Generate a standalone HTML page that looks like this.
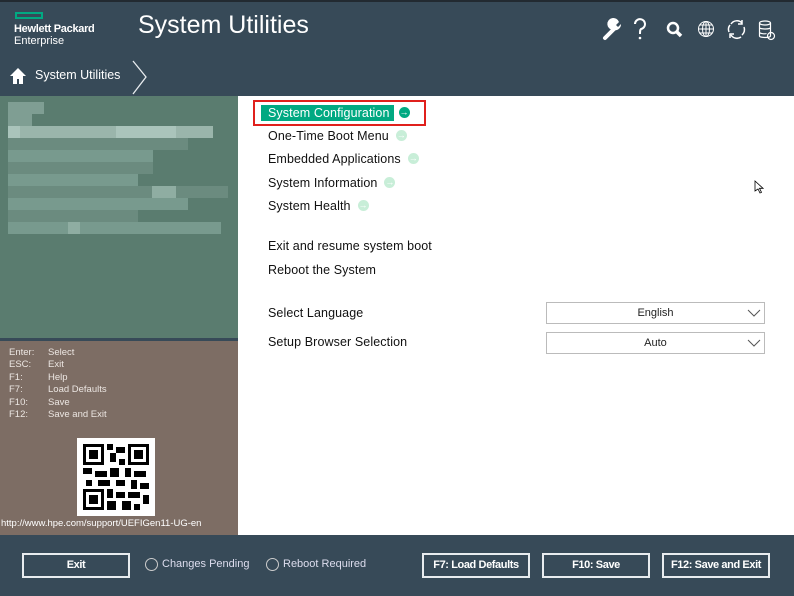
<!DOCTYPE html>
<html><head><style>
*{margin:0;padding:0;box-sizing:border-box}
body{width:794px;height:596px;background:#374a58;font-family:"Liberation Sans",sans-serif;position:relative;overflow:hidden}
.a{position:absolute}
.menu{font-size:12.5px;color:#111;position:absolute;left:268px;letter-spacing:0.1px}
.dot{display:inline-block;width:11px;height:11px;border-radius:50%;background:#c8eed8;vertical-align:middle;margin-left:7px;position:relative;top:-1px;color:#fff;font-size:9px;line-height:11px;text-align:center;font-weight:bold}
.key{position:absolute;left:9px;font-size:9.5px;color:#ece6e2}
.key span{position:absolute;left:39px;white-space:nowrap}
.btn{position:absolute;top:553px;height:25px;border:2px solid #e8ecef;color:#fff;font-size:11px;font-weight:bold;text-align:center;line-height:21px;letter-spacing:-0.4px}
.sel{position:absolute;left:546px;width:219px;height:22px;border:1px solid #bbb;background:#fff;font-size:11px;text-align:center;line-height:20px;color:#222}
.sel svg{position:absolute;right:3px;top:5px}
</style></head><body>
<div class="a" style="left:0;top:0;width:794px;height:2px;background:#222a31"></div>
<div class="a" style="left:15px;top:12px;width:28px;height:7px;border:2px solid #01a982"></div>
<div class="a" style="left:14px;top:23px;color:#fff;font-size:11px;font-weight:bold;letter-spacing:-0.3px">Hewlett Packard</div>
<div class="a" style="left:14px;top:35px;color:#fff;font-size:11px">Enterprise</div>
<div class="a" style="left:138px;top:11px;color:#fff;font-size:25px">System Utilities</div>
<svg class="a" style="left:600px;top:14px" width="190" height="30" viewBox="0 0 190 30" fill="none" stroke="#fff" stroke-width="2">
<path d="M5 24 L14 15" stroke-width="4" stroke-linecap="round"/><path d="M13 16 a6 6 0 1 1 6 -8 l-3 3 2 2 3-3 a6 6 0 0 1 -8 6z" fill="#fff" stroke="none"/>
<path d="M35 10 a5 5 0 1 1 6 5 c-1 1 -1 2 -1 5"/><circle cx="40" cy="24" r="1.3" fill="#fff" stroke="none"/>
<circle cx="73" cy="14" r="5" stroke-width="2.5"/><path d="M77 18 l4 4" stroke-width="3.5"/>
<g stroke-width="1"><circle cx="106" cy="15" r="7.5"/><ellipse cx="106" cy="15" rx="3.5" ry="7.5"/><path d="M98.5 15h15M100 11h12M100 19h12M106 7.5v15"/></g>
<g stroke-width="1.5"><path d="M131 10 a7 7 0 0 1 11 -1 M144 13 a7 7 0 0 1 -2 8 M141 23 a7 7 0 0 1 -10 -2 M129 18 a7 7 0 0 1 1 -7"/><path d="M142 6v4h-4M130 24v-4h4"/></g>
<g stroke-width="1.2"><ellipse cx="165" cy="9" rx="5.5" ry="2"/><path d="M159.5 9v13 c0 2 11 2 11 0v-13 M159.5 13.5c0 2 11 2 11 0 M159.5 18c0 2 6 2 7 1.5"/><circle cx="171" cy="22" r="3.5"/></g>
</svg>
<svg class="a" style="left:9px;top:67px" width="18" height="18" viewBox="0 0 18 18"><path d="M9 1 L1 9 h3 v8 h4 v-5 h2 v5 h4 v-8 h3z" fill="#fff"/></svg>
<div class="a" style="left:35px;top:68px;color:#fff;font-size:12.5px">System Utilities</div>
<svg class="a" style="left:130px;top:60px" width="20" height="36"><path d="M3 1 L16 17 L3 34" stroke="#e8ecef" stroke-width="1.3" fill="none"/></svg>
<div class="a" style="left:0;top:96px;width:238px;height:242px;background:#5a7c6f"></div>
<svg class="a" style="left:8px;top:102px" width="222" height="136">
<g fill="#7f9e93"><rect x="0" y="0" width="36" height="12"/><rect x="0" y="12" width="24" height="12"/></g>
<g fill="#9ab5ab"><rect x="0" y="24" width="205" height="12"/></g>
<g fill="#aac4bb"><rect x="0" y="24" width="12" height="12"/><rect x="108" y="24" width="60" height="12"/></g>
<g fill="#6d8d81" opacity=".9"><rect x="0" y="36" width="180" height="12"/><rect x="0" y="60" width="145" height="12"/><rect x="0" y="84" width="220" height="12"/><rect x="0" y="108" width="130" height="12"/></g>
<g fill="#789a8e"><rect x="0" y="48" width="145" height="12"/><rect x="0" y="72" width="130" height="12"/><rect x="0" y="96" width="180" height="12"/><rect x="0" y="120" width="213" height="12"/></g>
<g fill="#8fada2"><rect x="60" y="120" width="12" height="12"/><rect x="144" y="84" width="24" height="12"/></g>
</svg>
<div class="a" style="left:0;top:341px;width:238px;height:194px;background:#7d6d64"></div>
<div class="key" style="top:347px">Enter:<span>Select</span></div>
<div class="key" style="top:359px">ESC:<span>Exit</span></div>
<div class="key" style="top:372px">F1:<span>Help</span></div>
<div class="key" style="top:384px">F7:<span>Load Defaults</span></div>
<div class="key" style="top:397px">F10:<span>Save</span></div>
<div class="key" style="top:409px">F12:<span>Save and Exit</span></div>
<svg class="a" style="left:77px;top:438px" width="78" height="78" viewBox="0 0 26 26"><rect width="26" height="26" fill="#fff"/>
<g fill="#000"><path d="M2 2h7v7h-7zM3 3v5h5v-5zM4 4h3v3h-3z" fill-rule="evenodd"/><path d="M17 2h7v7h-7zM18 3v5h5v-5zM19 4h3v3h-3z" fill-rule="evenodd"/><path d="M2 17h7v7h-7zM3 18v5h5v-5zM4 19h3v3h-3z" fill-rule="evenodd"/>
<rect x="10" y="2" width="2" height="2"/><rect x="13" y="3" width="3" height="2"/><rect x="11" y="5" width="2" height="3"/><rect x="14" y="7" width="2" height="2"/><rect x="2" y="10" width="3" height="2"/><rect x="6" y="11" width="4" height="2"/><rect x="11" y="10" width="3" height="3"/><rect x="16" y="10" width="2" height="3"/><rect x="19" y="11" width="4" height="2"/><rect x="3" y="14" width="2" height="2"/><rect x="7" y="14" width="4" height="2"/><rect x="13" y="14" width="3" height="2"/><rect x="18" y="14" width="2" height="3"/><rect x="21" y="15" width="3" height="2"/><rect x="10" y="17" width="2" height="3"/><rect x="13" y="18" width="3" height="2"/><rect x="17" y="18" width="4" height="2"/><rect x="22" y="19" width="2" height="3"/><rect x="10" y="21" width="3" height="3"/><rect x="15" y="21" width="3" height="3"/><rect x="19" y="22" width="2" height="2"/></g></svg>
<div class="a" style="left:1px;top:518px;font-size:9.5px;color:#fff">http://www.hpe.com/support/UEFIGen11-UG-en</div>
<div class="a" style="left:238px;top:96px;width:556px;height:439px;background:#fff"></div>
<div class="a" style="left:253px;top:100px;width:173px;height:26px;border:2px solid #e0201c"></div>
<div class="a" style="left:261px;top:105px;width:133px;height:16px;background:#01a982"></div>
<div class="menu" style="top:106px;color:#fff">System Configuration<span class="dot" style="background:#01a982;margin-left:9px">&#x2192;</span></div>
<div class="menu" style="top:129px">One-Time Boot Menu<span class="dot">&#x2192;</span></div>
<div class="menu" style="top:152px">Embedded Applications<span class="dot">&#x2192;</span></div>
<div class="menu" style="top:176px">System Information<span class="dot">&#x2192;</span></div>
<div class="menu" style="top:199px">System Health<span class="dot">&#x2192;</span></div>
<div class="menu" style="top:239px">Exit and resume system boot</div>
<div class="menu" style="top:263px">Reboot the System</div>
<div class="menu" style="top:306px">Select Language</div>
<div class="menu" style="top:335px">Setup Browser Selection</div>
<div class="sel" style="top:302px">English<svg width="14" height="10"><path d="M1 2l6 6 6-6" stroke="#555" fill="none"/></svg></div>
<div class="sel" style="top:332px">Auto<svg width="14" height="10"><path d="M1 2l6 6 6-6" stroke="#555" fill="none"/></svg></div>
<svg class="a" style="left:754px;top:180px" width="10" height="14"><path d="M1 1v10l3-2 2 4 1.5-.7-2-4h3.5z" fill="#fff" stroke="#000" stroke-width="0.8"/></svg>
<div class="btn" style="left:22px;width:108px">Exit</div>
<div class="a" style="left:145px;top:558px;width:13px;height:13px;border:1.3px solid #ccc;border-radius:50%"></div>
<div class="a" style="left:162px;top:558px;font-size:11px;color:#dde">Changes Pending</div>
<div class="a" style="left:266px;top:558px;width:13px;height:13px;border:1.3px solid #ccc;border-radius:50%"></div>
<div class="a" style="left:283px;top:558px;font-size:11px;color:#dde">Reboot Required</div>
<div class="btn" style="left:422px;width:108px">F7: Load Defaults</div>
<div class="btn" style="left:542px;width:108px">F10: Save</div>
<div class="btn" style="left:662px;width:108px">F12: Save and Exit</div>
</body></html>
